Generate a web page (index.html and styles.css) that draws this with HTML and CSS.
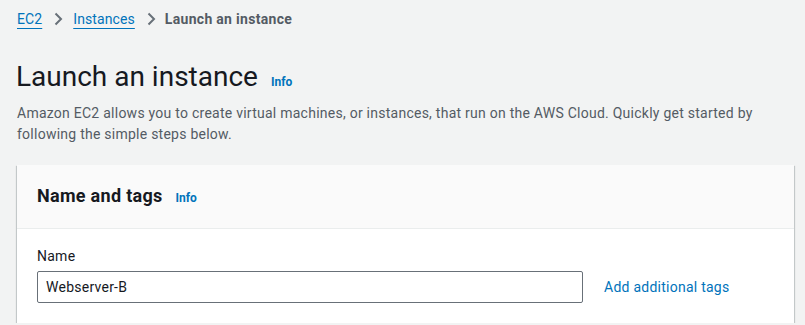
FILE: index.html
```html
<!DOCTYPE html>
<html lang="en">
<head>
    <meta charset="UTF-8">
    <meta name="viewport" content="width=device-width, initial-scale=1.0">
    <title>Launch an instance | EC2</title>
    <link rel="stylesheet" href="styles.css">
</head>
<body>
    <nav class="breadcrumbs">
        <a href="#" class="crumb-link">EC2</a>
        <svg class="crumb-sep" width="16" height="16" viewBox="0 0 16 16"><path d="M5.5 2.5l5.5 5.5-5.5 5.5" fill="none" stroke="#687078" stroke-width="2"/></svg>
        <a href="#" class="crumb-link">Instances</a>
        <svg class="crumb-sep" width="16" height="16" viewBox="0 0 16 16"><path d="M5.5 2.5l5.5 5.5-5.5 5.5" fill="none" stroke="#687078" stroke-width="2"/></svg>
        <span class="crumb-current">Launch an instance</span>
    </nav>

    <header class="page-header">
        <h1 class="page-title">Launch an instance <a href="#" class="info-link">Info</a></h1>
        <p class="page-desc">Amazon EC2 allows you to create virtual machines, or instances, that run on the AWS Cloud. Quickly get started by following the simple steps below.</p>
    </header>

    <section class="card">
        <div class="card-header">
            <h2 class="card-title">Name and tags <a href="#" class="info-link">Info</a></h2>
        </div>
        <div class="card-body">
            <label for="nome" class="field-label">Name</label>
            <div class="field-row">
                <input type="text" id="nome" class="field-input" value="Webserver-B">
                <a href="#" class="tags-link">Add additional tags</a>
            </div>
        </div>
    </section>
</body>
</html>
```

FILE: styles.css
```css
body {
    background-color: #f2f3f3;
    color: #16191f;
    font-family: Roboto, 'Noto Sans', sans-serif;
    font-size: 14px;
    letter-spacing: 0.25px;
    margin: 0;
    padding: 0 11px 0 16px;
}

a {
    text-decoration: none;
}

/* Breadcrumbs */
.breadcrumbs {
    display: flex;
    align-items: center;
    padding-top: 9px;
    height: 20px;
    line-height: 20px;
    letter-spacing: 0.1px;
}

.crumb-link {
    color: #0073bb;
    text-decoration: underline;
    text-underline-offset: 4px;
    margin-left: 1px;
}

.crumb-sep {
    margin: 0 6px 0 8px;
}

.crumb-current {
    color: #545b64;
    font-weight: bold;
    letter-spacing: 0.3px;
}

/* Page header */
.page-header {
    padding-top: 30px;
}

.page-title {
    margin: 0;
    font-size: 28px;
    font-weight: normal;
    line-height: 36px;
    letter-spacing: 0;
    color: #16191f;
}

.info-link {
    color: #0073bb;
    font-size: 12px;
    font-weight: bold;
    letter-spacing: 0;
    margin-left: 6px;
}

.page-desc {
    margin: 3px 0 0 1px;
    color: #545b64;
    line-height: 21px;
}

/* Card */
.card {
    margin-top: 20px;
    margin-left: 1px;
    background-color: #ffffff;
    box-shadow: 0 1px 1px 0 rgba(0, 28, 36, 0.3), 1px 1px 1px 0 rgba(0, 28, 36, 0.15), -1px 1px 1px 0 rgba(0, 28, 36, 0.15);
}

.card-header {
    background-color: #fafafa;
    border-bottom: 1px solid #eaeded;
    padding: 20px 20px 21px;
    height: 22px;
}

.card-title {
    margin: 0;
    font-size: 18px;
    font-weight: bold;
    line-height: 22px;
    letter-spacing: 0.3px;
}

.card-title .info-link {
    margin-left: 8px;
}

.card-body {
    padding: 16px 20px 20px;
}

.field-label {
    display: block;
    line-height: 22px;
    margin-bottom: 4px;
}

.field-row {
    display: flex;
    align-items: center;
    gap: 21px;
}

.field-input {
    width: 546px;
    height: 32px;
    box-sizing: border-box;
    border: 1px solid #687078;
    border-radius: 2px;
    padding: 0 8px;
    font-family: inherit;
    font-size: 14px;
    letter-spacing: 0.25px;
    color: #16191f;
    background-color: #ffffff;
}

.tags-link {
    color: #0073bb;
}
```
